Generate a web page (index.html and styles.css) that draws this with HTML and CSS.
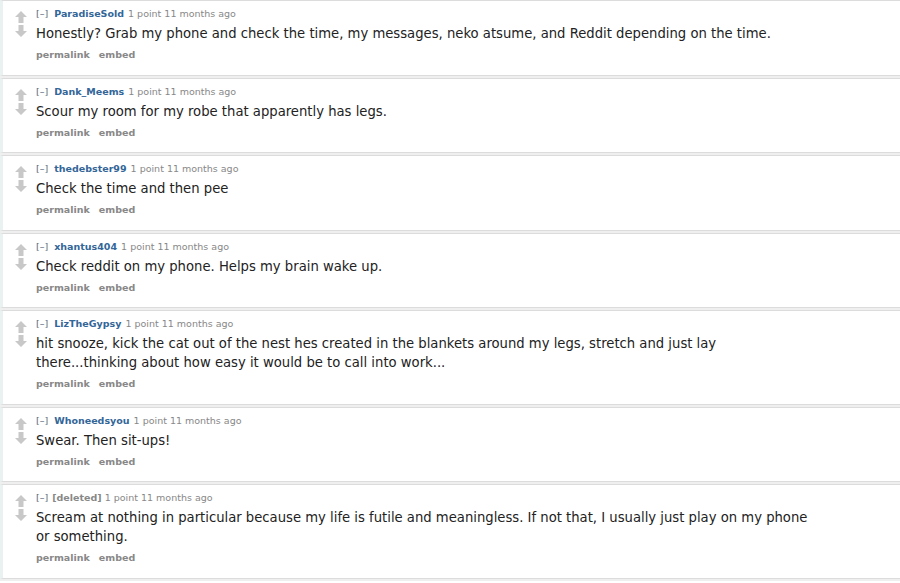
FILE: index.html
```html
<!DOCTYPE html>
<html>
<head>
<meta charset="utf-8">
<link rel="stylesheet" href="styles.css">
</head>
<body>
<div class="list">

<div class="comment">
  <div class="votes">
    <svg class="arrow" viewBox="0 0 12 12"><path d="M6 0 L12 6 L8.5 6 L8.5 12 L3.5 12 L3.5 6 L0 6 Z"/></svg>
    <svg class="arrow" viewBox="0 0 12 12"><path d="M6 12 L12 6 L8.5 6 L8.5 0 L3.5 0 L3.5 6 L0 6 Z"/></svg>
  </div>
  <div class="entry">
    <p class="tagline"><span class="expand">[–]</span> <a class="author">ParadiseSold</a> <span class="meta">1 point 11 months ago</span></p>
    <p class="md">Honestly? Grab my phone and check the time, my messages, neko atsume, and Reddit depending on the time.</p>
    <p class="buttons"><span>permalink</span><span>embed</span></p>
  </div>
</div>

<div class="comment">
  <div class="votes">
    <svg class="arrow" viewBox="0 0 12 12"><path d="M6 0 L12 6 L8.5 6 L8.5 12 L3.5 12 L3.5 6 L0 6 Z"/></svg>
    <svg class="arrow" viewBox="0 0 12 12"><path d="M6 12 L12 6 L8.5 6 L8.5 0 L3.5 0 L3.5 6 L0 6 Z"/></svg>
  </div>
  <div class="entry">
    <p class="tagline"><span class="expand">[–]</span> <a class="author">Dank_Meems</a> <span class="meta">1 point 11 months ago</span></p>
    <p class="md">Scour my room for my robe that apparently has legs.</p>
    <p class="buttons"><span>permalink</span><span>embed</span></p>
  </div>
</div>

<div class="comment">
  <div class="votes">
    <svg class="arrow" viewBox="0 0 12 12"><path d="M6 0 L12 6 L8.5 6 L8.5 12 L3.5 12 L3.5 6 L0 6 Z"/></svg>
    <svg class="arrow" viewBox="0 0 12 12"><path d="M6 12 L12 6 L8.5 6 L8.5 0 L3.5 0 L3.5 6 L0 6 Z"/></svg>
  </div>
  <div class="entry">
    <p class="tagline"><span class="expand">[–]</span> <a class="author">thedebster99</a> <span class="meta">1 point 11 months ago</span></p>
    <p class="md">Check the time and then pee</p>
    <p class="buttons"><span>permalink</span><span>embed</span></p>
  </div>
</div>

<div class="comment">
  <div class="votes">
    <svg class="arrow" viewBox="0 0 12 12"><path d="M6 0 L12 6 L8.5 6 L8.5 12 L3.5 12 L3.5 6 L0 6 Z"/></svg>
    <svg class="arrow" viewBox="0 0 12 12"><path d="M6 12 L12 6 L8.5 6 L8.5 0 L3.5 0 L3.5 6 L0 6 Z"/></svg>
  </div>
  <div class="entry">
    <p class="tagline"><span class="expand">[–]</span> <a class="author">xhantus404</a> <span class="meta">1 point 11 months ago</span></p>
    <p class="md">Check reddit on my phone. Helps my brain wake up.</p>
    <p class="buttons"><span>permalink</span><span>embed</span></p>
  </div>
</div>

<div class="comment">
  <div class="votes">
    <svg class="arrow" viewBox="0 0 12 12"><path d="M6 0 L12 6 L8.5 6 L8.5 12 L3.5 12 L3.5 6 L0 6 Z"/></svg>
    <svg class="arrow" viewBox="0 0 12 12"><path d="M6 12 L12 6 L8.5 6 L8.5 0 L3.5 0 L3.5 6 L0 6 Z"/></svg>
  </div>
  <div class="entry">
    <p class="tagline"><span class="expand">[–]</span> <a class="author">LizTheGypsy</a> <span class="meta">1 point 11 months ago</span></p>
    <p class="md">hit snooze, kick the cat out of the nest hes created in the blankets around my legs, stretch and just lay there...thinking about how easy it would be to call into work...</p>
    <p class="buttons"><span>permalink</span><span>embed</span></p>
  </div>
</div>

<div class="comment">
  <div class="votes">
    <svg class="arrow" viewBox="0 0 12 12"><path d="M6 0 L12 6 L8.5 6 L8.5 12 L3.5 12 L3.5 6 L0 6 Z"/></svg>
    <svg class="arrow" viewBox="0 0 12 12"><path d="M6 12 L12 6 L8.5 6 L8.5 0 L3.5 0 L3.5 6 L0 6 Z"/></svg>
  </div>
  <div class="entry">
    <p class="tagline"><span class="expand">[–]</span> <a class="author">Whoneedsyou</a> <span class="meta">1 point 11 months ago</span></p>
    <p class="md">Swear. Then sit-ups!</p>
    <p class="buttons"><span>permalink</span><span>embed</span></p>
  </div>
</div>

<div class="comment">
  <div class="votes">
    <svg class="arrow" viewBox="0 0 12 12"><path d="M6 0 L12 6 L8.5 6 L8.5 12 L3.5 12 L3.5 6 L0 6 Z"/></svg>
    <svg class="arrow" viewBox="0 0 12 12"><path d="M6 12 L12 6 L8.5 6 L8.5 0 L3.5 0 L3.5 6 L0 6 Z"/></svg>
  </div>
  <div class="entry">
    <p class="tagline"><span class="expand">[–]</span> <span class="deleted">[deleted]</span> <span class="meta">1 point 11 months ago</span></p>
    <p class="md">Scream at nothing in particular because my life is futile and meaningless. If not that, I usually just play on my phone or something.</p>
    <p class="buttons"><span>permalink</span><span>embed</span></p>
  </div>
</div>

</div>
</body>
</html>
```

FILE: styles.css
```css
html, body {
  margin: 0;
  padding: 0;
  background: #ffffff;
}
body {
  font-family: "DejaVu Sans", Verdana, sans-serif;
  color: #222;
}
.list {
  display: flex;
  flex-direction: column;
  gap: 2px;
  background: #efefef;
  padding: 0 0 2px 0;
}
.comment {
  display: flex;
  background: #ffffff;
  border-top: 1px solid #dcdcdc;
  border-bottom: 1px solid #dcdcdc;
  border-left: 3px solid #eaf2f1;
  padding: 6px 0 12.5px 0;
}
.votes {
  width: 33px;
  display: flex;
  flex-direction: column;
  align-items: center;
  gap: 2px;
  padding-top: 4px;
  padding-left: 2px;
  box-sizing: border-box;
}
.arrow {
  width: 12px;
  height: 12px;
  fill: #c8c8c8;
}
.entry {
  flex: 1;
  min-width: 0;
  padding-right: 82px;
}
.tagline {
  margin: 0;
  font-size: 9.5px;
  line-height: 14px;
  color: #888;
}
.expand {
  color: #5a6675;
}
.author {
  color: #336699;
  font-weight: bold;
  margin-left: 3px;
  margin-right: 1px;
}
.deleted {
  color: #888;
  font-weight: bold;
  margin-left: 1px;
}
.md {
  margin: 3px 0 0 0;
  font-size: 13.2px;
  line-height: 19px;
  color: #222;
}
.buttons {
  margin: 5px 0 0 0;
  font-size: 9.5px;
  line-height: 14px;
  font-weight: bold;
  color: #888;
  display: flex;
  gap: 9px;
}
```
